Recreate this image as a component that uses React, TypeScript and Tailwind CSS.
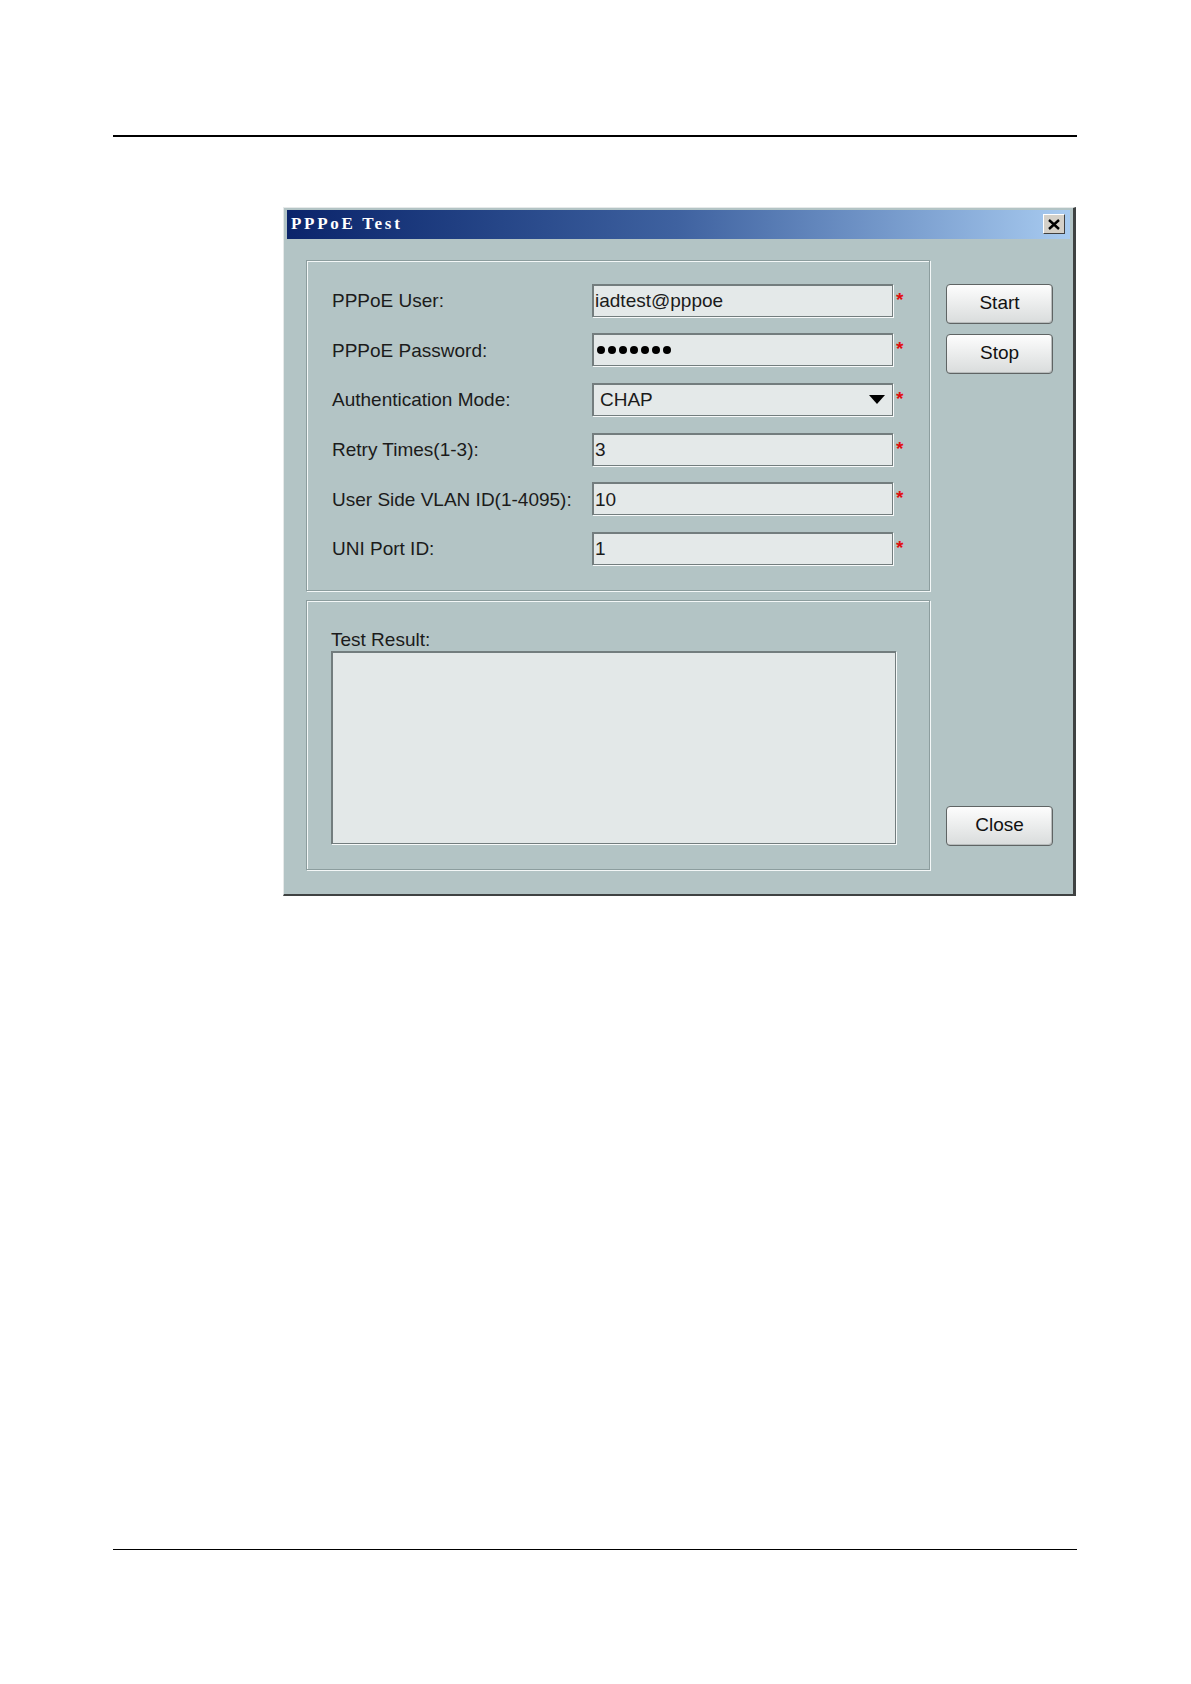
import { ChevronDown } from 'lucide-react'

const fields = [
  { label: 'PPPoE User:', value: 'iadtest@pppoe', kind: 'text' },
  { label: 'PPPoE Password:', value: '', kind: 'password' },
  { label: 'Authentication Mode:', value: 'CHAP', kind: 'select' },
  { label: 'Retry Times(1-3):', value: '3', kind: 'text' },
  { label: 'User Side VLAN ID(1-4095):', value: '10', kind: 'text' },
  { label: 'UNI Port ID:', value: '1', kind: 'text' },
]

function Field({ value, kind }: { value: string; kind: string }) {
  return (
    <div className="flex h-[33px] w-[301px] items-center border border-[#737d7e] border-t-2 border-l-2 bg-[#e4e9e9] shadow-[1px_1px_0_#f7fafa]">
      {kind === 'password' && (
        <div className="flex gap-[3px] pl-[3px]">
          {[0, 1, 2, 3, 4, 5, 6].map(i => (
            <span key={i} className="h-[8px] w-[8px] rounded-full bg-black" />
          ))}
        </div>
      )}
      {kind === 'text' && <span className="pl-[1px] leading-none">{value}</span>}
      {kind === 'select' && (
        <div className="flex flex-1 items-center justify-between pl-[6px] pr-[7px]">
          <span className="leading-none">{value}</span>
          <svg width="16" height="9" viewBox="0 0 16 9">
            <polygon points="0,0 16,0 8,9" fill="#000" />
          </svg>
        </div>
      )}
    </div>
  )
}

function WinButton({ children }: { children: string }) {
  return (
    <button className="h-[40px] w-[107px] rounded-[4px] border border-[#5f6464] bg-gradient-to-b from-[#fdfdfd] to-[#d9dcdc] text-[19px] text-[#111] shadow-[inset_-1px_-1px_0_#b8bcbc]">
      {children}
    </button>
  )
}

export default function App() {
  return (
    <div className="h-[1684px] w-[1191px] bg-white pt-[135px] font-['Liberation_Sans',Arial,sans-serif] text-[19px] text-[#1b1b1b]">
      <div className="ml-[113px] h-[1.5px] w-[964px] bg-black" />

      <div className="ml-[283px] mt-[70px] h-[689px] w-[793px] border-l border-t border-r-[3px] border-b-[2px] border-l-[#e6e9e9] border-t-[#e6e9e9] border-r-[#3f4242] border-b-[#3f4242] bg-[#b3c4c5] pl-[3px] pr-[3px] pt-[2px]">
        <div className="flex h-[29px] items-center justify-between bg-gradient-to-r from-[#0b246b] via-[#3f62a0] to-[#a8cbf0] pl-[4px] pr-[5px]">
          <span className="font-['Liberation_Serif',serif] text-[17px] font-bold tracking-[2.7px] text-white">
            PPPoE Test
          </span>
          <div className="flex h-[20px] w-[22px] items-center justify-center border border-t-white border-l-white border-r-[#404040] border-b-[#404040] bg-[#d4d0c8]">
            <svg width="12" height="11" viewBox="0 0 12 11">
              <path d="M1 1 L11 10 M11 1 L1 10" stroke="#000" strokeWidth="2.4" />
            </svg>
          </div>
        </div>

        <div className="flex pl-[19px] pt-[21px]">
          <div className="flex w-[624px] flex-col gap-[9px]">
            <div className="h-[331px] border border-[#8c9d9e] shadow-[1px_1px_0_#f3f7f7,inset_1px_1px_0_#f3f7f7] pl-[25px] pt-[23px]">
              <div className="flex flex-col gap-[16.7px]">
                {fields.map(f => (
                  <div key={f.label} className="flex h-[33px] items-center">
                    <span className="w-[260px] pt-[1px] leading-none">{f.label}</span>
                    <Field value={f.value} kind={f.kind} />
                    <span className="ml-[3px] self-start pt-[6px] text-[19px] font-bold leading-none text-[#e01010]">*</span>
                  </div>
                ))}
              </div>
            </div>

            <div className="h-[270px] border border-[#8c9d9e] shadow-[1px_1px_0_#f3f7f7,inset_1px_1px_0_#f3f7f7] pl-[24px] pt-[28px]">
              <div className="h-[22px] leading-[22px]">Test Result:</div>
              <div className="h-[193px] w-[565px] border border-[#737d7e] border-t-2 border-l-2 bg-[#e3e8e8] shadow-[1px_1px_0_#f7fafa]" />
            </div>
          </div>

          <div className="ml-[16px] flex flex-col pt-[24px] pb-[24px]">
            <WinButton>Start</WinButton>
            <div className="mt-[10px]">
              <WinButton>Stop</WinButton>
            </div>
            <div className="mt-auto">
              <WinButton>Close</WinButton>
            </div>
          </div>
        </div>
      </div>

      <div className="ml-[113px] mt-[653px] h-[1.5px] w-[964px] bg-black" />
    </div>
  )
}
